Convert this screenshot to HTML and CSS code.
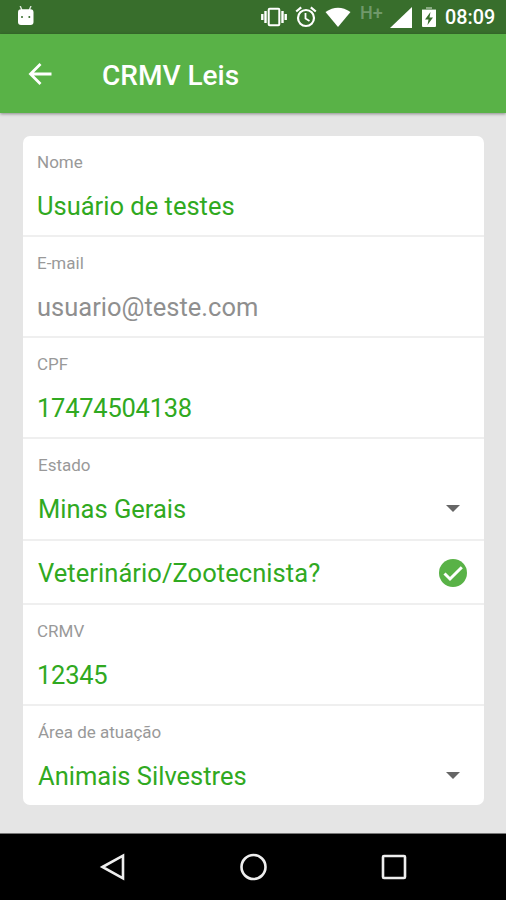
FILE: index.html
```html
<!DOCTYPE html>
<html lang="pt-BR">
<head>
<meta charset="utf-8">
<title>CRMV Leis</title>
<link rel="stylesheet" href="styles.css">
</head>
<body>
<div class="screen">
  <header class="status">
    <svg class="droid" width="18" height="20" viewBox="0 0 18 20"><path d="M3.200 0l1.700 4M14 0l-1.700 4" stroke="#dce8da" stroke-width="1.400"/><path d="M1 6.500Q1 3.200 4 3.200h9.500Q16.500 3.200 16.500 6.500V16Q16.500 19 13.500 19H4Q1 19 1 16z" fill="#fff"/><circle cx="5" cy="11" r="1" fill="#386e2c"/><circle cx="12.300" cy="11" r="1" fill="#386e2c"/></svg>
    <svg class="vibrate" width="26" height="20" viewBox="0 0 26 20"><rect x="7.700" y="1.700" width="10.600" height="16.600" rx="1" fill="none" stroke="#fff" stroke-width="2"/><path d="M4.500 4v12M21.500 4v12M1.300 7v6M24.700 7v6" stroke="#fff" stroke-width="2.400"/></svg>
    <svg class="alarm" width="22" height="22" viewBox="0 0 22 22" fill="none" stroke="#fff" stroke-width="2.200"><circle cx="11" cy="12" r="8"/><path d="M1.200 5.500l5-4.200M20.800 5.500l-5-4.200"/><path d="M10.500 7v5.500l4 2.500" stroke-width="1.800"/></svg>
    <svg class="wifi" width="26" height="20" viewBox="0 0 26 20"><path d="M.5 5Q13-3.500 25.500 5L13 20z" fill="#fff"/></svg>
    <span class="network">H+</span>
    <svg class="signal" width="22" height="22" viewBox="0 0 22 22"><path d="M22 0v21H0z" fill="#fff"/></svg>
    <svg class="battery" width="14" height="20" viewBox="0 0 14 20"><path d="M4 0h6v2h4v3H0V2h4z" fill="#89aa82"/><path d="M0 3h14v16q0 1-1 1H1q-1 0-1-1z" fill="#fff"/><path d="M8.500 5L3 12.500h3.500L5.500 18 11 10.500H7.500z" fill="#386e2c"/></svg>
    <span class="clock">08:09</span>
  </header>
  <nav class="appbar">
    <svg class="back" width="24" height="24" viewBox="0 0 24 24" fill="none" stroke="#fff" stroke-width="2.800"><path d="M23.500 12H2.500M12.500 2L2.500 12l10 10"/></svg>
    <h1 class="title">CRMV Leis</h1>
  </nav>
  <main class="content">
    <div class="card">
      <div class="row"><span class="label">Nome</span><span class="value">Usuário de testes</span></div>
      <div class="row"><span class="label">E-mail</span><span class="value muted">usuario@teste.com</span></div>
      <div class="row"><span class="label">CPF</span><span class="value digits">17474504138</span></div>
      <div class="row select"><span class="label">Estado</span><span class="value">Minas Gerais</span><i class="caret"></i></div>
      <div class="row check"><span class="value">Veterinário/Zootecnista?</span><svg width="28" height="28" viewBox="0 0 28 28"><circle cx="14" cy="14" r="14" fill="#59b247"/><path d="M5.500 14.500l5.500 5.500L22.800 8.200" fill="none" stroke="#fff" stroke-width="3"/></svg></div>
      <div class="row crmv"><span class="label">CRMV</span><span class="value digits">12345</span></div>
      <div class="row select"><span class="label">Área de atuação</span><span class="value">Animais Silvestres</span><i class="caret"></i></div>
    </div>
  </main>
  <footer class="navbar">
    <svg width="28" height="28" viewBox="0 0 28 28"><path d="M4.500 14L25 2.700v22.600z"/></svg>
    <svg width="28" height="28" viewBox="0 0 28 28"><circle cx="14.500" cy="14" r="12"/></svg>
    <svg width="28" height="28" viewBox="0 0 28 28"><rect x="3" y="3" width="22" height="22" rx="1"/></svg>
  </footer>
</div>
</body>
</html>
```
FILE: styles.css
```css
* { box-sizing: border-box; }
body { margin: 0; font-family: Roboto, sans-serif; }
svg { display: block; flex: none; }
.screen { width: 506px; height: 900px; display: flex; flex-direction: column; background: #e5e5e5; overflow: hidden; }
.status { height: 34px; flex: none; display: flex; align-items: flex-start; background: #386e2c; color: #fff; }
.droid { margin: 6px 0 0 17px; }
.vibrate { margin: 7px 0 0 226px; }
.alarm { margin: 6px 0 0 8px; }
.wifi { margin: 7px 0 0 8px; }
.network { width: 30px; margin: 2px 0 0 9px; font-size: 18px; font-weight: 500; line-height: 22px; color: #70996a; }
.signal { margin: 7px 0 0 0; }
.battery { margin: 7px 0 0 10px; }
.clock { margin: 6px 0 0 9px; font-size: 19.8px; font-weight: 500; line-height: 24px; white-space: nowrap; }
.appbar { height: 79px; flex: none; display: flex; align-items: center; padding-left: 28px; background: #59b247; box-shadow: 0 1px 3px rgba(0, 0, 0, .4); }
.title { margin: 4px 0 0 50px; color: #fff; font-size: 28px; font-weight: 500; line-height: 32px; }
.content { flex: 1; padding: 22.5px 22px 0 23px; }
.card { background: #fff; border-radius: 7px; overflow: hidden; }
.row { height: 101.3px; display: flex; flex-direction: column; position: relative; padding: 16px 15px 0 14px; border-bottom: 2px solid #efefef; }
.row:last-child { height: 99.6px; border-bottom: 0; }
.label { font-size: 17px; line-height: 20px; color: #999; }
.value { margin-top: 19px; font-size: 25.5px; line-height: 30px; color: #30a921; white-space: nowrap; }
.digits { letter-spacing: -.25px; }
.muted { color: #8f8f8f; }
.select { padding-left: 15px; }
.crmv { height: 100.6px; }
.check { height: 64.4px; flex-direction: row; align-items: center; justify-content: space-between; padding: 3px 17px 0 15px; }
.check .value { margin-top: 0; letter-spacing: .06px; }
.caret { position: absolute; right: 24px; top: 66px; border: 7px solid transparent; border-top-color: #666; border-bottom: 0; }
.navbar { height: 67px; flex: none; display: flex; justify-content: center; gap: 113px; padding-top: 19px; background: #000; border-top: 1px solid #777; }
.navbar svg { fill: none; stroke: #eee; stroke-width: 2.6; }
```
